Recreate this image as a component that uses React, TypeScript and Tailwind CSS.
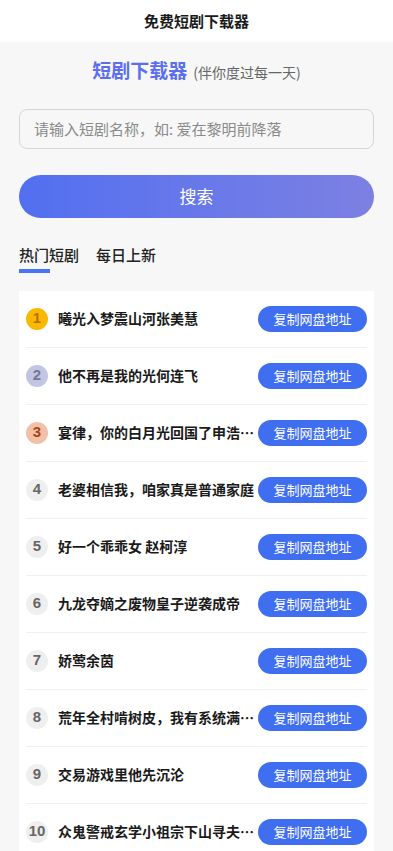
import { useState } from 'react';

const dramas = [
  '曦光入梦震山河张美慧',
  '他不再是我的光何连飞',
  '宴律，你的白月光回国了申浩男陈子仪',
  '老婆相信我，咱家真是普通家庭',
  '好一个乖乖女 赵柯淳',
  '九龙夺嫡之废物皇子逆袭成帝',
  '娇莺余茵',
  '荒年全村啃树皮，我有系统满仓粮',
  '交易游戏里他先沉沦',
  '众鬼警戒玄学小祖宗下山寻夫了啊',
];

function rankStyle(i: number) {
  if (i === 0) return 'bg-[#fbb800] text-[#b86f00]';
  if (i === 1) return 'bg-[#c2c6e2] text-[#737899]';
  if (i === 2) return 'bg-[#f2bfa7] text-[#a8431c]';
  return 'bg-[#efefef] text-[#666666]';
}

export default function App() {
  const [tab, setTab] = useState(0);

  return (
    <div className="flex min-h-screen flex-col bg-[#f7f7f7] font-['Noto_Sans_CJK_SC',sans-serif] text-[#1a1a1a]">
      <header className="flex h-[42px] items-center justify-center bg-white text-[15px] font-bold">
        免费短剧下载器
      </header>

      <main className="flex flex-col px-[19px]">
        {/* Title */}
        <div className="mt-[14px] flex items-baseline justify-center gap-[6px]">
          <span className="text-[19px] font-bold text-[#5b6ef2]">短剧下载器</span>
          <span className="text-[14px] text-[#666666]">(伴你度过每一天)</span>
        </div>

        <input
          className="mt-[24px] h-[40px] w-full rounded-[8px] border border-[#d6d6d6] bg-transparent px-[14px] text-[15px] outline-none placeholder:text-[#8a8a8a]"
          placeholder="请输入短剧名称，如: 爱在黎明前降落"
        />

        <button className="mt-[26px] h-[43px] w-full rounded-full bg-gradient-to-r from-[#526ff0] to-[#7c80e2] text-[17px] text-white">
          搜索
        </button>

        {/* Tabs */}
        <div className="mt-[26px] flex gap-[17px]">
          {['热门短剧', '每日上新'].map((t, i) => (
            <button key={t} onClick={() => setTab(i)} className="flex flex-col items-start">
              <span className="text-[15px] font-medium leading-[21px] text-[#222222]">{t}</span>
              <span className={`mt-[4px] h-[4px] w-[31px] ${tab === i ? 'bg-[#4a74ef]' : 'bg-transparent'}`} />
            </button>
          ))}
        </div>

        {/* List */}
        <ul className="mt-[18px] flex flex-col bg-white px-[7px]">
          {dramas.map((name, i) => (
            <li key={name} className="flex h-[57px] items-center border-b border-[#f0f0f0]">
              <span
                className={`flex h-[22px] w-[22px] shrink-0 items-center justify-center rounded-full font-['Liberation_Sans',sans-serif] text-[15px] font-bold ${rankStyle(i)}`}
              >
                {i + 1}
              </span>
              <span className="ml-[10px] min-w-0 flex-1 truncate text-[14px] font-bold">{name}</span>
              <button className="ml-[2px] h-[26px] w-[109px] shrink-0 rounded-full bg-[#3f6ff0] text-[13px] text-white">
                复制网盘地址
              </button>
            </li>
          ))}
        </ul>
      </main>
    </div>
  );
}
